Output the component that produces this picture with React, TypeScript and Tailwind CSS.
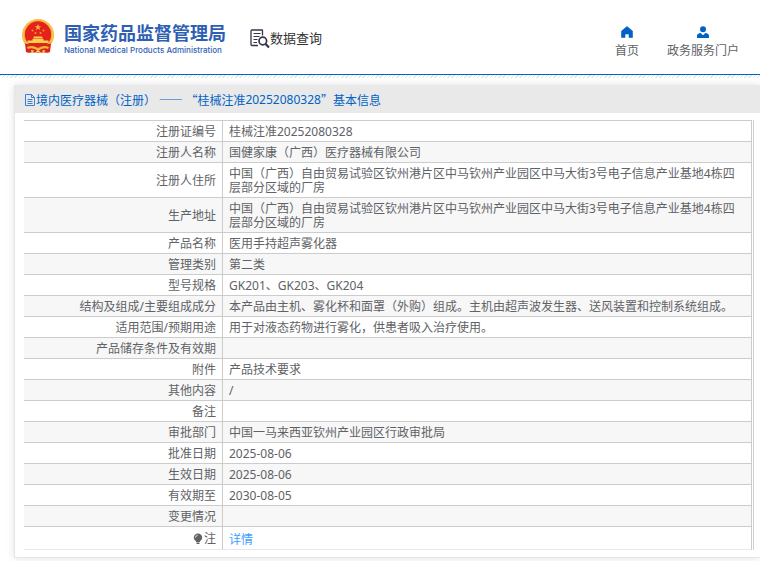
import React from 'react';

type Row = { label: string; value: string; icon?: boolean; link?: boolean };

const address =
  '中国（广西）自由贸易试验区钦州港片区中马钦州产业园区中马大街3号电子信息产业基地4栋四层部分区域的厂房';

const rows: Row[] = [
  { label: '注册证编号', value: '桂械注准20252080328' },
  { label: '注册人名称', value: '国健家康（广西）医疗器械有限公司' },
  { label: '注册人住所', value: address },
  { label: '生产地址', value: address },
  { label: '产品名称', value: '医用手持超声雾化器' },
  { label: '管理类别', value: '第二类' },
  { label: '型号规格', value: 'GK201、GK203、GK204' },
  {
    label: '结构及组成/主要组成成分',
    value: '本产品由主机、雾化杯和面罩（外购）组成。主机由超声波发生器、送风装置和控制系统组成。',
  },
  { label: '适用范围/预期用途', value: '用于对液态药物进行雾化，供患者吸入治疗使用。' },
  { label: '产品储存条件及有效期', value: '' },
  { label: '附件', value: '产品技术要求' },
  { label: '其他内容', value: '/' },
  { label: '备注', value: '' },
  { label: '审批部门', value: '中国一马来西亚钦州产业园区行政审批局' },
  { label: '批准日期', value: '2025-08-06' },
  { label: '生效日期', value: '2025-08-06' },
  { label: '有效期至', value: '2030-08-05' },
  { label: '变更情况', value: '' },
  { label: '注', value: '详情', icon: true, link: true },
];

const Emblem: React.FC = () => (
  <svg viewBox="0 0 32 35" className="h-[35px] w-8" aria-hidden="true">
    <path d="M5 25 L27 25 L28 33 Q24 35 21 32 L16 34 L11 32 Q8 35 4 33 Z" fill="#d8261c" />
    <circle cx="16" cy="16" r="16" fill="#f3b53a" />
    <circle cx="16" cy="15.5" r="14.8" fill="none" stroke="#fad561" strokeWidth="1" strokeDasharray="2 1" />
    <circle cx="16" cy="15.5" r="13.2" fill="#e3231b" />
    <path d="M16 5l.9 2.3h2.3l-1.9 1.5.7 2.3-2-1.4-2 1.4.7-2.3-1.9-1.5h2.3z" fill="#f9b73a" />
    <g fill="#f39a35">
      <circle cx="10.5" cy="11.5" r="1" />
      <circle cx="13.5" cy="14" r="1" />
      <circle cx="18.5" cy="14" r="1" />
      <circle cx="21.5" cy="11.5" r="1" />
    </g>
    <path d="M12 17.5h8l1 2h-10zM10.5 20h11v1.5h5V24h-21v-2.5h5z" fill="#fbd052" />
    <path d="M3 24.5 Q16 27 29 24.5 L28 33 Q16 34 4 33 Z" fill="#d8261c" />
    <path d="M5 28 Q10 25.5 16 29 Q22 25.5 27 28 L26 30 Q21 28 16 32 Q11 28 6 30Z" fill="#f3b53a" />
    <path d="M9 31l3 .5-2 3zM23 31l-3 .5 2 3zM13 33.5l3-2.5 3 2.5z" fill="#fad561" />
  </svg>
);

const SearchDocIcon: React.FC = () => (
  <svg viewBox="0 0 20 20" className="h-5 w-5" fill="none" stroke="#35354a" aria-hidden="true">
    <path d="M12.5 6.5V1.5Q12.5 1 12 1H2Q1 1 1 2v13.5q0 1 1 1h6" strokeWidth="1.3" />
    <path d="M3.500 4.500h7M3.500 7.500h6M3.500 10.500h4M3.500 13.500h3.500" strokeWidth="1" />
    <circle cx="12.8" cy="12" r="3.8" strokeWidth="1.7" />
    <path d="M15.6 15l3.4 3.6" strokeWidth="2.2" />
  </svg>
);

const HomeIcon: React.FC = () => (
  <svg viewBox="0 0 12 12" className="h-3 w-3" fill="#0062c4" aria-hidden="true">
    <path d="M6 .5L11.5 5v6.500H8V8H4v3.500H.5V5z" stroke="#0062c4" strokeWidth=".6" strokeLinejoin="round" />
  </svg>
);

const UserIcon: React.FC = () => (
  <svg viewBox="0 0 12 12" className="h-3 w-3" fill="#0062c4" aria-hidden="true">
    <circle cx="6" cy="3.2" r="3" />
    <path d="M0 12V9.5Q.3 7.500 3.600 7L6 9.300 8.400 7q3.300.5 3.600 2.500V12z" />
  </svg>
);

const DocIcon: React.FC = () => (
  <svg viewBox="0 0 12 12" className="h-3 w-3" fill="none" stroke="#3a7fd0" aria-hidden="true">
    <path d="M1.5.5h6l3 3v8h-9zM7.5.5v3h3M3.5 5.5h5M3.5 7.5h5M3.5 9.5h5" />
  </svg>
);

const BulbIcon: React.FC = () => (
  <svg viewBox="0 0 12 12" className="h-3 w-3" fill="#606266" aria-hidden="true">
    <path d="M6 .5a4.2 4.2 0 0 1 4.2 4.2C10.2 7 8 7.6 7.8 9H4.2C4 7.6 1.8 7 1.8 4.7A4.2 4.2 0 0 1 6 .5z" />
    <path d="M4.5 9.5h3V11h-3z" />
    <path d="M3.5 4.7Q3.6 2.5 5.7 2.2" fill="none" stroke="#fff" strokeWidth=".8" />
  </svg>
);

const App: React.FC = () => (
  <div className="overflow-hidden bg-white pb-1 font-['Noto_Sans','Noto_Sans_CJK_SC',sans-serif] text-xs text-[#606266]" lang="zh-CN">
    <header className="flex h-[75px] items-start justify-between border-b border-[#0062c4] pr-[21px] pl-[22px]">
      <div className="flex pt-[19px]">
        <Emblem />
        <div className="ml-2.5 text-[#2f5fb3]">
          <div className="font-['Noto_Sans_CJK_SC',sans-serif] text-lg leading-[27px] font-bold whitespace-nowrap">国家药品监督管理局</div>
          <div className="font-[Inter,sans-serif] text-[8px] leading-[8px] font-medium whitespace-nowrap">
            National Medical Products Administration
          </div>
        </div>
        <div className="ml-6 flex items-center pt-1 text-[13px] whitespace-nowrap text-[#333]">
          <SearchDocIcon />
          数据查询
        </div>
      </div>
      <nav className="flex gap-7 pt-[26px]">
        <a href="#home" className="flex flex-col items-center gap-[5px] whitespace-nowrap">
          <HomeIcon />
          首页
        </a>
        <a href="#portal" className="flex flex-col items-center gap-[5px] whitespace-nowrap">
          <UserIcon />
          政务服务门户
        </a>
      </nav>
    </header>
    <div className="h-[3px] bg-[repeating-linear-gradient(135deg,#e4e4e4_0px,#e4e4e4_1px,#ffffff_1px,#ffffff_3px)]" />

    <main className="mt-[7px] ml-3.5 border-b border-l border-[#e6e6e6] pb-[7px] shadow-[0_0_8px_rgba(0,0,0,0.12)]">
      <h1 className="flex h-7 items-center bg-[#e9e9e9] pt-px pl-[9px] font-['Noto_Sans_CJK_SC',sans-serif] whitespace-pre text-[#0062c4]">
        <DocIcon />
        境内医疗器械（注册） —— “桂械注准<span className="font-['Noto_Sans',sans-serif]">20252080328</span>”基本信息
      </h1>
      <div className="mt-[7px] mr-1.5 ml-[9px] border-r border-[#cfcfd6] pr-px">
        <table className="w-full table-fixed border-separate border-spacing-0 border-t border-r border-[#ccc] leading-[14px]">
          <tbody>
            {rows.map((row) => (
              <tr key={row.label} className="group even:bg-[#f7f7f7]">
                <th
                  scope="row"
                  className="w-[199px] border-r border-b border-[#ccc] px-1.5 pt-1 pb-0.5 text-right font-normal group-last:border-b-[#e8e8ee]"
                >
                  {row.icon ? (
                    <span className="flex items-center justify-end">
                      <BulbIcon />
                      {row.label}
                    </span>
                  ) : (
                    row.label
                  )}
                </th>
                <td className="h-[21px] border-b border-[#ccc] px-1.5 pt-1 pb-0.5 group-last:border-b-[#e8e8ee]">
                  {row.link ? (
                    <a href="#detail" className="block pt-0.5 text-[#409eff]">
                      {row.value}
                    </a>
                  ) : (
                    row.value
                  )}
                </td>
              </tr>
            ))}
          </tbody>
        </table>
      </div>
    </main>
  </div>
);

export default App;
